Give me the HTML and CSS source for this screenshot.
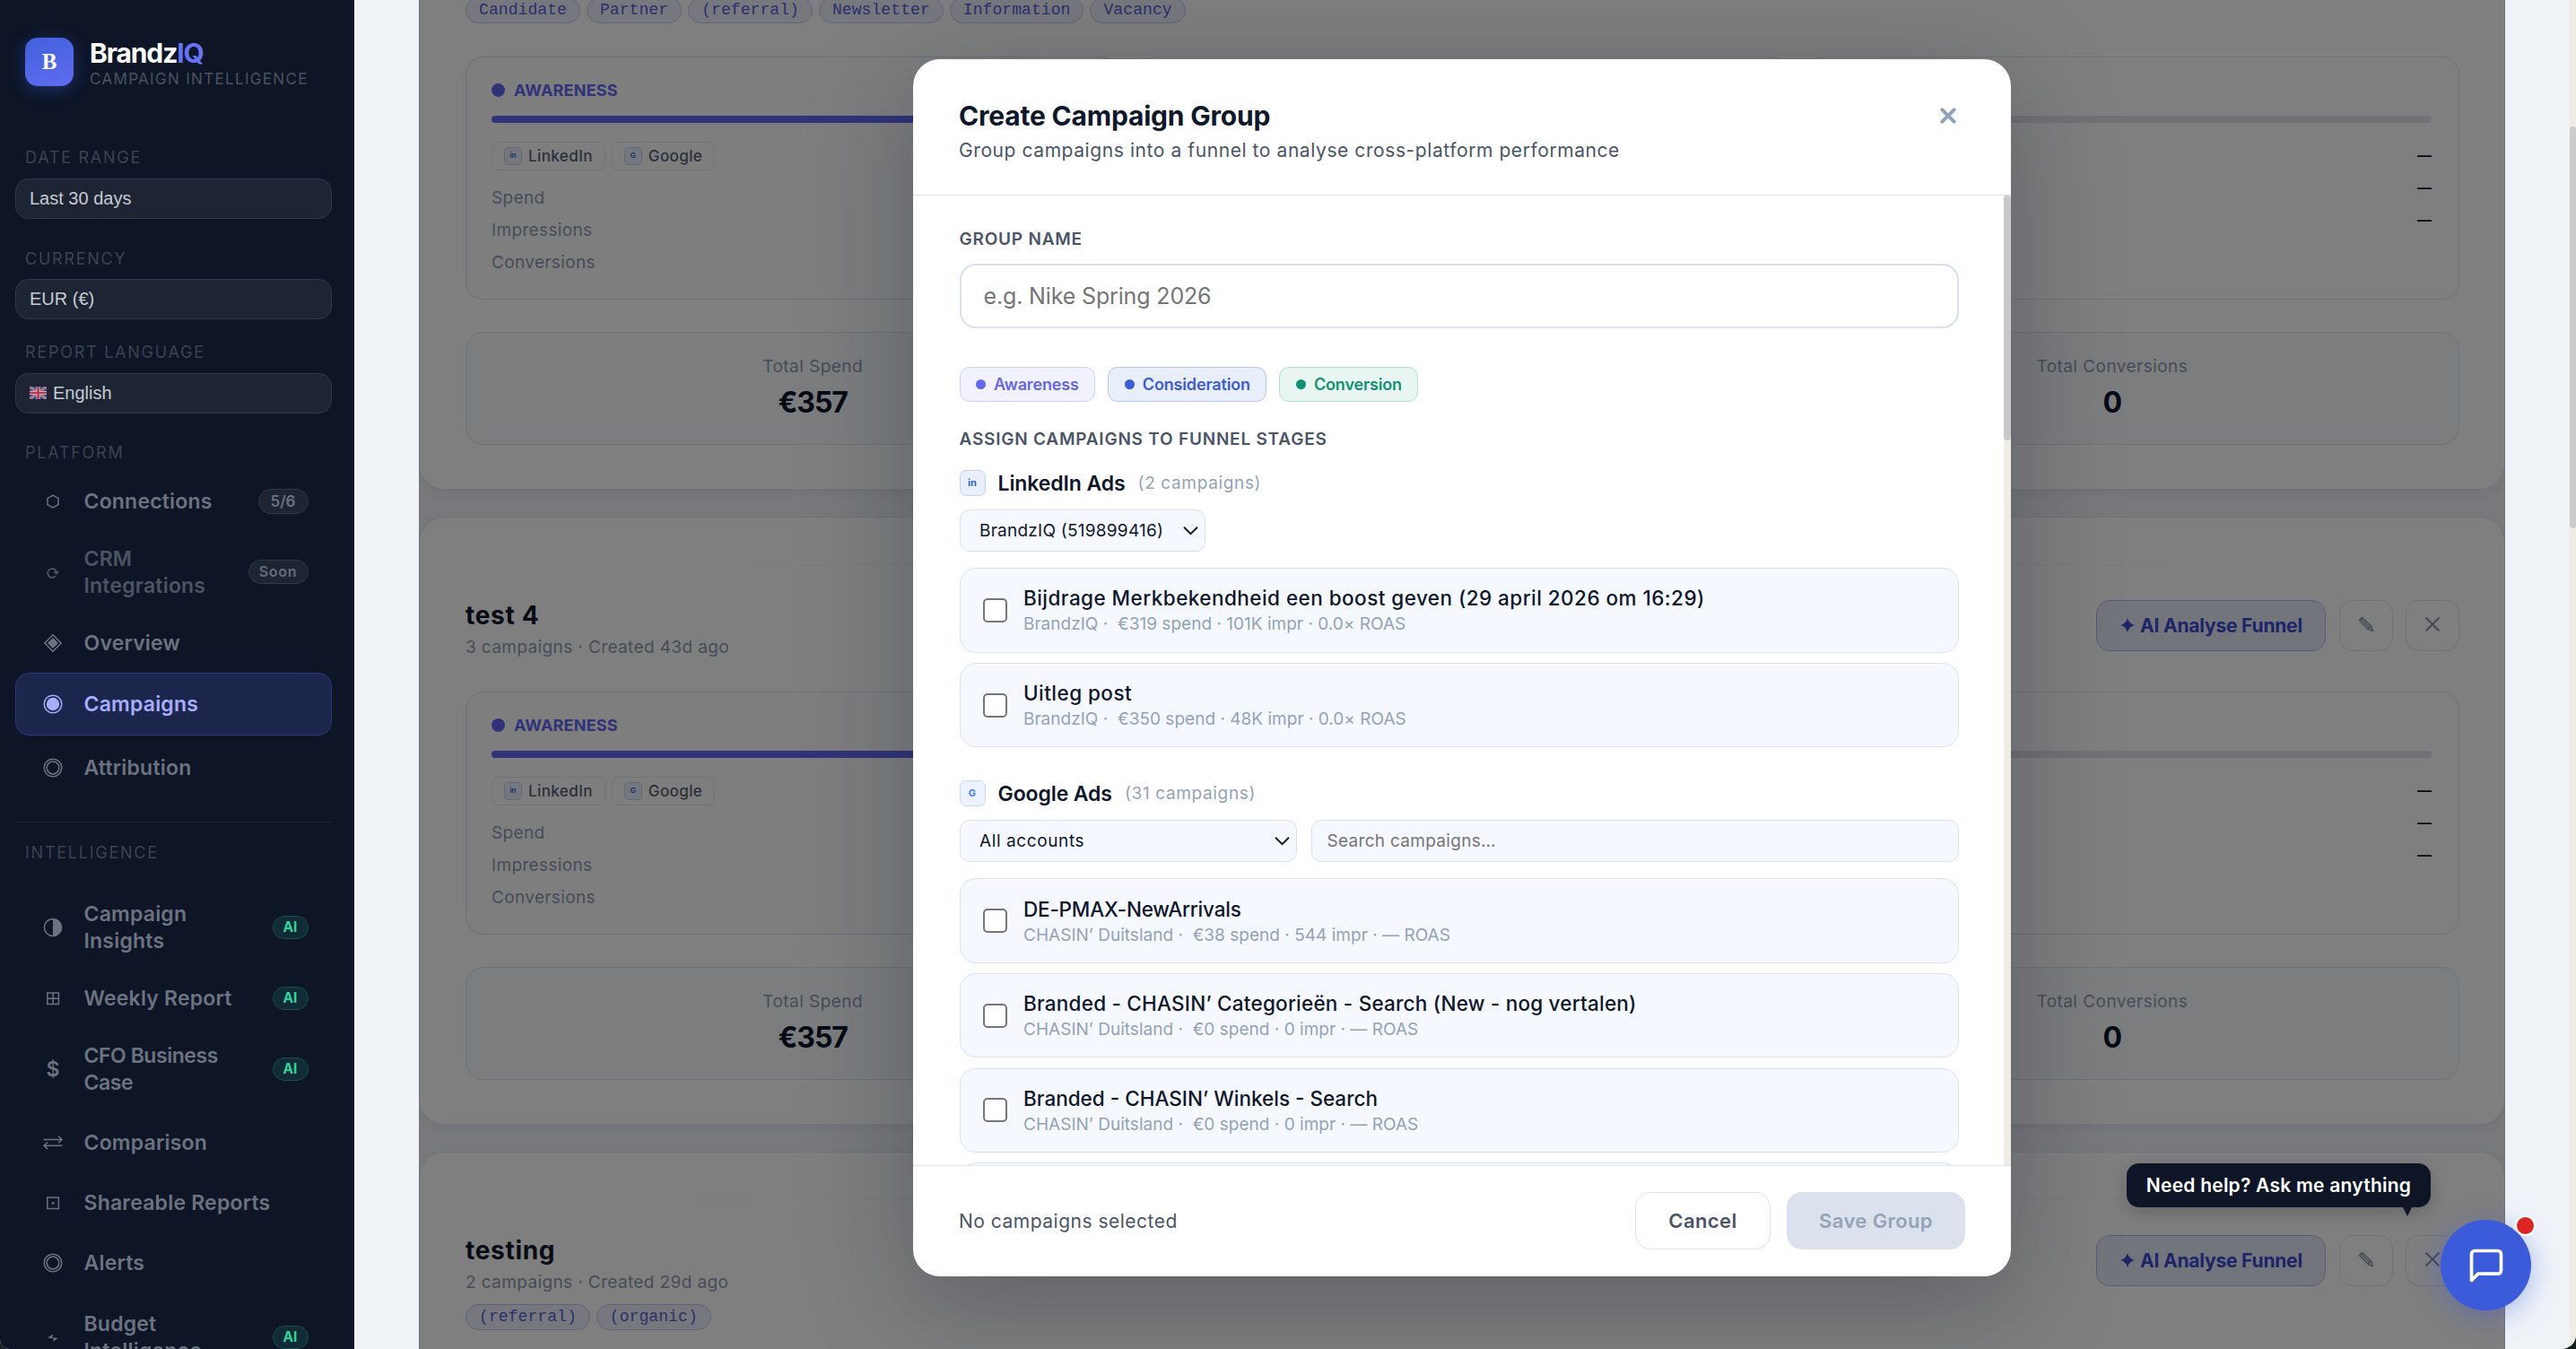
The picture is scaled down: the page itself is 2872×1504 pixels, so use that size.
FILE: index.html
```
<!DOCTYPE html>
<html lang="en">
<head>
    <meta charset="UTF-8" />
    <meta name="viewport" content="width=device-width, initial-scale=1" />
    <title>BrandzIQ - Campaigns</title>
    <link rel="stylesheet" href="styles.css">
</head>
<body>
<div class="app">
    <aside class="sidebar">
        <div class="logo">
            <div class="logo-icon">B</div>
            <div>
                <div class="logo-name">Brandz<span>IQ</span></div>
                <div class="logo-sub">CAMPAIGN INTELLIGENCE</div>
            </div>
        </div>

        <div class="side-label">DATE RANGE</div>
        <div class="side-select">Last 30 days</div>
        <div class="side-label currency">CURRENCY</div>
        <div class="side-select">EUR (€)</div>
        <div class="side-label language">REPORT LANGUAGE</div>
        <div class="side-select">
            <svg class="flag" viewBox="0 0 19 14">
                <rect width="19" height="14" rx="1" fill="#2f4a86"/>
                <path d="M0 0L19 14M19 0L0 14" stroke="#d5d8de" stroke-width="2.4"/>
                <path d="M0 0L19 14M19 0L0 14" stroke="#b8394a" stroke-width="1.2"/>
                <path d="M9.5 0V14M0 7H19" stroke="#d5d8de" stroke-width="4"/>
                <path d="M9.5 0V14M0 7H19" stroke="#b8394a" stroke-width="2.6"/>
            </svg>
            English
        </div>

        <div class="side-label platform">PLATFORM</div>
        <nav>
            <a class="nav-item">
                <svg class="nav-icon" viewBox="0 0 24 24"><path d="M12 5.2L18 8.6V15.6L12 19L6 15.6V8.6Z"/></svg>
                <span class="nav-text">Connections</span>
                <span class="badge count">5/6</span>
            </a>
            <a class="nav-item double dim">
                <svg class="nav-icon" viewBox="0 0 24 24"><path d="M15 16.2A5 5 0 1 1 16 11.5" stroke-width="1.9"/><path d="M12 11H18.8L15.8 15Z" class="solid"/></svg>
                <span class="nav-text">CRM<br>Integrations</span>
                <span class="badge soon">Soon</span>
            </a>
            <a class="nav-item">
                <svg class="nav-icon" viewBox="0 0 24 24"><path d="M12 2.8L21.2 12L12 21.2L2.8 12Z"/><path d="M12 6L18 12L12 18L6 12Z" class="solid"/></svg>
                <span class="nav-text">Overview</span>
            </a>
            <a class="nav-item active">
                <svg class="nav-icon" viewBox="0 0 24 24"><circle cx="12" cy="12" r="9.8"/><circle cx="12" cy="12" r="7.2" class="solid"/></svg>
                <span class="nav-text">Campaigns</span>
            </a>
            <a class="nav-item tall">
                <svg class="nav-icon" viewBox="0 0 24 24"><circle cx="12" cy="12" r="9.8"/><circle cx="12" cy="12" r="6.9"/></svg>
                <span class="nav-text">Attribution</span>
            </a>
        </nav>

        <div class="side-label intelligence">INTELLIGENCE</div>
        <nav class="intelligence-nav">
            <a class="nav-item double">
                <svg class="nav-icon" viewBox="0 0 24 24"><circle cx="12" cy="12" r="9.6"/><path d="M12 2.4A9.6 9.6 0 0 1 12 21.6Z" class="solid"/></svg>
                <span class="nav-text">Campaign<br>Insights</span>
                <span class="badge ai">AI</span>
            </a>
            <a class="nav-item">
                <svg class="nav-icon" viewBox="0 0 24 24"><path d="M5.8 6H18.4V18.6H5.8ZM12.1 6V18.6M5.8 12.3H18.4"/></svg>
                <span class="nav-text">Weekly Report</span>
                <span class="badge ai">AI</span>
            </a>
            <a class="nav-item double">
                <span class="nav-icon dollar">$</span>
                <span class="nav-text tight">CFO Business<br>Case</span>
                <span class="badge ai">AI</span>
            </a>
            <a class="nav-item tall">
                <svg class="nav-icon" viewBox="0 0 24 24"><path d="M1.5 8.5H22M18 4.8L22 8.5L18 12.2M22.5 15.2H2M6 11.5L2 15.2L6 18.9"/></svg>
                <span class="nav-text">Comparison</span>
            </a>
            <a class="nav-item short">
                <svg class="nav-icon" viewBox="0 0 24 24"><path d="M5.8 6H18.4V18.6H5.8Z"/><path d="M10.8 11H13.4V13.6H10.8Z" class="solid"/></svg>
                <span class="nav-text">Shareable Reports</span>
            </a>
            <a class="nav-item tall">
                <svg class="nav-icon" viewBox="0 0 24 24"><circle cx="12" cy="12" r="9.8"/><circle cx="12" cy="12" r="6.9"/></svg>
                <span class="nav-text">Alerts</span>
            </a>
            <a class="nav-item double">
                <svg class="nav-icon" viewBox="0 0 24 24"><path d="M6 12.5L12 8.5L11.2 12.2L18 12.8L12.2 16.8L12.8 13.4Z" class="solid"/></svg>
                <span class="nav-text">Budget<br>Intelligence</span>
                <span class="badge ai">AI</span>
            </a>
        </nav>
    </aside>

    <main class="main">
        <div class="groups">
            <section class="group first">
                <div class="group-head">
                    <div>
                        <h2>test 5</h2>
                        <p>6 campaigns · Created 50d ago</p>
                        <div class="tags"><span>Candidate</span><span>Partner</span><span>(referral)</span><span>Newsletter</span><span>Information</span><span>Vacancy</span></div>
                    </div>
                </div>
                <div class="stages">
                    <div class="stage awareness">
                        <div class="stage-name"><i></i>AWARENESS</div>
                        <div class="bar"></div>
                        <div class="chips"><span><b>in</b>LinkedIn</span><span><b>G</b>Google</span></div>
                        <div class="metric">Spend</div>
                        <div class="metric">Impressions</div>
                        <div class="metric">Conversions</div>
                    </div>
                    <div class="stage"></div>
                    <div class="stage">
                        <div class="stage-name"></div>
                        <div class="bar empty"></div>
                        <div class="metric value">—</div>
                        <div class="metric value">—</div>
                        <div class="metric value">—</div>
                    </div>
                </div>
                <div class="totals">
                    <div><p>Total Spend</p><strong>€357</strong></div>
                    <div></div>
                    <div><p>Total Conversions</p><strong>0</strong></div>
                </div>
            </section>

            <section class="group">
                <div class="group-head">
                    <div>
                        <h2>test 4</h2>
                        <p>3 campaigns · Created 43d ago</p>
                    </div>
                    <div class="actions">
                        <button class="analyse"><svg viewBox="0 0 16 16"><path d="M8 0Q9.6 6.4 16 8Q9.6 9.6 8 16Q6.4 9.6 0 8Q6.4 6.4 8 0Z"/></svg>AI Analyse Funnel</button>
                        <button class="icon-btn"><svg viewBox="0 0 18 18"><path d="M1.5 4.5L4.5 1.5L14.5 11L16.5 16.5L11 14.5ZM3 3L13 12.8M11 14.5L14.5 11"/></svg></button>
                        <button class="icon-btn"><svg viewBox="0 0 18 18"><path d="M1.5 1.5L16.5 16.5M16.5 1.5L1.5 16.5" stroke-width="2"/></svg></button>
                    </div>
                </div>
                <div class="stages">
                    <div class="stage awareness">
                        <div class="stage-name"><i></i>AWARENESS</div>
                        <div class="bar"></div>
                        <div class="chips"><span><b>in</b>LinkedIn</span><span><b>G</b>Google</span></div>
                        <div class="metric">Spend</div>
                        <div class="metric">Impressions</div>
                        <div class="metric">Conversions</div>
                    </div>
                    <div class="stage"></div>
                    <div class="stage">
                        <div class="stage-name"></div>
                        <div class="bar empty"></div>
                        <div class="metric value">—</div>
                        <div class="metric value">—</div>
                        <div class="metric value">—</div>
                    </div>
                </div>
                <div class="totals">
                    <div><p>Total Spend</p><strong>€357</strong></div>
                    <div></div>
                    <div><p>Total Conversions</p><strong>0</strong></div>
                </div>
            </section>

            <section class="group">
                <div class="group-head">
                    <div>
                        <h2>testing</h2>
                        <p>2 campaigns · Created 29d ago</p>
                        <div class="tags"><span>(referral)</span><span>(organic)</span></div>
                    </div>
                    <div class="actions">
                        <button class="analyse"><svg viewBox="0 0 16 16"><path d="M8 0Q9.6 6.4 16 8Q9.6 9.6 8 16Q6.4 9.6 0 8Q6.4 6.4 8 0Z"/></svg>AI Analyse Funnel</button>
                        <button class="icon-btn"><svg viewBox="0 0 18 18"><path d="M1.5 4.5L4.5 1.5L14.5 11L16.5 16.5L11 14.5ZM3 3L13 12.8M11 14.5L14.5 11"/></svg></button>
                        <button class="icon-btn"><svg viewBox="0 0 18 18"><path d="M1.5 1.5L16.5 16.5M16.5 1.5L1.5 16.5" stroke-width="2"/></svg></button>
                    </div>
                </div>
            </section>

            <div class="overlay">
                <div class="modal">
                    <header class="modal-head">
                        <div>
                            <h1>Create Campaign Group</h1>
                            <p>Group campaigns into a funnel to analyse cross-platform performance</p>
                        </div>
                        <svg class="close" viewBox="0 0 18 18"><path d="M2.4 2.4L15.6 15.6M15.6 2.4L2.4 15.6"/></svg>
                    </header>

                    <div class="modal-body">
                        <div class="modal-content">
                            <div class="field-label">GROUP NAME</div>
                            <div class="name-input">e.g. Nike Spring 2026</div>

                            <div class="pills">
                                <span class="pill pill-awareness"><i></i>Awareness</span>
                                <span class="pill pill-consideration"><i></i>Consideration</span>
                                <span class="pill pill-conversion"><i></i>Conversion</span>
                            </div>

                            <div class="field-label">ASSIGN CAMPAIGNS TO FUNNEL STAGES</div>

                            <div class="platform-row"><b>in</b><strong>LinkedIn Ads</strong><span>(2 campaigns)</span></div>
                            <div class="filters">
                                <div class="select account">BrandzIQ (519899416)<svg viewBox="0 0 16 10"><path d="M1 1.5L8 8.5L15 1.5"/></svg></div>
                            </div>
                            <div class="list">
                                <div class="item"><span class="check"></span><div><h3>Bijdrage Merkbekendheid een boost geven (29 april 2026 om 16:29)</h3><p>BrandzIQ · &nbsp;€319 spend · 101K impr · 0.0× ROAS</p></div></div>
                                <div class="item"><span class="check"></span><div><h3>Uitleg post</h3><p>BrandzIQ · &nbsp;€350 spend · 48K impr · 0.0× ROAS</p></div></div>
                            </div>

                            <div class="platform-row google"><b>G</b><strong>Google Ads</strong><span>(31 campaigns)</span></div>
                            <div class="filters">
                                <div class="select all">All accounts<svg viewBox="0 0 16 10"><path d="M1 1.5L8 8.5L15 1.5"/></svg></div>
                                <div class="search">Search campaigns…</div>
                            </div>
                            <div class="list">
                                <div class="item"><span class="check"></span><div><h3 class="caps">DE-PMAX-NewArrivals</h3><p>CHASIN’ Duitsland · &nbsp;€38 spend · 544 impr · — ROAS</p></div></div>
                                <div class="item"><span class="check"></span><div><h3 class="branded">Branded - CHASIN’ Categorieën - Search (New - nog vertalen)</h3><p>CHASIN’ Duitsland · &nbsp;€0 spend · 0 impr · — ROAS</p></div></div>
                                <div class="item"><span class="check"></span><div><h3 class="winkels">Branded - CHASIN’ Winkels - Search</h3><p>CHASIN’ Duitsland · &nbsp;€0 spend · 0 impr · — ROAS</p></div></div>
                                <div class="item"></div>
                            </div>
                        </div>
                        <div class="modal-scroll"><div></div></div>
                    </div>

                    <footer class="modal-foot">
                        <span>No campaigns selected</span>
                        <button class="cancel">Cancel</button>
                        <button class="save">Save Group</button>
                    </footer>
                </div>
            </div>
        </div>
    </main>

    <div class="page-scroll"><div></div></div>
</div>

<div class="help-tip">Need help? Ask me anything</div>
<div class="help-btn">
    <svg viewBox="0 0 24 24"><path d="M21 15a2 2 0 0 1-2 2H7l-4 4V5a2 2 0 0 1 2-2h14a2 2 0 0 1 2 2z"/></svg>
    <span class="help-dot"></span>
</div>
</body>
</html>
```
FILE: styles.css
```
* {
    box-sizing: border-box;
    margin: 0;
    padding: 0;
}

html {
    background: #14201c;
}

body {
    width: 2872px;
    height: 1504px;
    overflow: hidden;
    position: relative;
    font-family: Inter, "Liberation Sans", sans-serif;
    color: #0f172a;
}

button {
    font-family: inherit;
}

.app {
    display: flex;
    height: 1504px;
    border-radius: 0 0 16px 10px;
    overflow: hidden;
    background: #eff3f8;
}

/* ---------- Sidebar ---------- */
.sidebar {
    width: 395px;
    flex: none;
    height: 1504px;
    padding: 42px 25px 0 17px;
    background: #0d1526;
    overflow: hidden;
}

.logo {
    display: flex;
    gap: 18px;
    padding-left: 11px;
    height: 123px;
}

.logo-icon {
    width: 54px;
    height: 54px;
    border-radius: 14px;
    background: linear-gradient(160deg, #4260dc, #5f6df0);
    box-shadow: 0 4px 18px rgba(67, 97, 238, 0.35);
    color: #fff;
    font: 700 25px/53px "Liberation Serif", serif;
    text-align: center;
}

.logo-name {
    font-size: 30px;
    line-height: 34px;
    font-weight: 700;
    letter-spacing: -1.1px;
    color: #fff;
}

.logo-name span {
    color: #6674f4;
}

.logo-sub {
    margin-top: 2px;
    font-size: 17px;
    line-height: 20px;
    letter-spacing: 1.32px;
    color: #4a5260;
}

.side-label {
    padding-left: 11px;
    font-size: 18px;
    line-height: 22px;
    letter-spacing: 1.75px;
    color: #3b4352;
}

.side-label.currency {
    margin-top: 34px;
}

.side-label.language {
    margin-top: 26px;
}

.side-label.platform {
    margin-top: 33px;
    margin-bottom: 10px;
}

.side-label.intelligence {
    margin-top: 23px;
    padding-top: 23px;
    border-top: 1px solid #1a2335;
}

.side-select {
    display: flex;
    align-items: center;
    gap: 7px;
    height: 45px;
    margin-top: 11.5px;
    padding-left: 15px;
    border: 1px solid #2f3847;
    border-radius: 14px;
    background: #1d2534;
    color: #c6cad1;
    font: 20px "Liberation Sans", sans-serif;
}

.flag {
    width: 19px;
    height: 14px;
}

.nav-item {
    display: flex;
    align-items: center;
    height: 66px;
    padding: 0 25.5px 0 29px;
    border: 1px solid transparent;
    color: #6c7380;
}

.nav-item.double {
    height: 92px;
}

.nav-item.tall {
    height: 73px;
}

.nav-item.short {
    height: 61px;
}

.nav-item.dim {
    color: #4c5463;
}

.nav-item.active {
    height: 70px;
    border-color: #2f377e;
    border-radius: 15px;
    background: #1c264c;
    color: #a6aefd;
}

.nav-icon {
    width: 24px;
    height: 24px;
    margin-right: 22.5px;
    flex: none;
    fill: none;
    stroke: currentColor;
    stroke-width: 1.5;
}

.nav-icon .solid {
    fill: currentColor;
    stroke: none;
}

.dollar {
    font-size: 23px;
    line-height: 24px;
    font-weight: 600;
    text-align: center;
}

.nav-text {
    flex: 1;
    font-size: 23px;
    line-height: 30px;
    font-weight: 600;
    letter-spacing: 0.2px;
    white-space: nowrap;
}

.nav-text.tight {
    letter-spacing: -0.45px;
}

.badge {
    border: 1px solid #2f3847;
    border-radius: 14px;
    background: #1d2534;
    text-align: center;
    font-weight: 600;
}

.badge.count {
    width: 56px;
    line-height: 26px;
    font-size: 17px;
}

.badge.soon {
    width: 67px;
    line-height: 25px;
    font-size: 16px;
    letter-spacing: 0.7px;
    color: #646c7a;
}

.badge.ai {
    width: 40px;
    line-height: 24px;
    font-size: 15.5px;
    font-weight: 700;
    border-color: #195048;
    background: #112c37;
    color: #2fd698;
}

.intelligence-nav {
    margin-top: 26px;
}

/* ---------- Campaign groups ---------- */
.main {
    flex: 1;
    padding: 0 72px;
}

.groups {
    position: relative;
    height: 1504px;
    overflow: hidden;
}

.group {
    margin-bottom: 30px;
    padding: 52px 50px 49px 51px;
    border: 1px solid #e2e6f2;
    border-radius: 28px;
    background: #fff;
    box-shadow: 0 4px 14px rgba(15, 23, 42, 0.06);
}

.group.first {
    margin-top: -173px;
}

.group::before {
    content: "";
    display: block;
    height: 1px;
    margin: 0 160px;
    background: linear-gradient(90deg, transparent, #e0e0f4 45%, #e0e0f4 55%, transparent);
}

.group-head {
    display: flex;
    justify-content: space-between;
    align-items: flex-start;
    padding-top: 38.5px;
    min-height: 104px;
    margin-bottom: 37px;
}

.group-head h2 {
    font-size: 28px;
    line-height: 35px;
    letter-spacing: 0.7px;
}

.group-head p {
    margin-top: 6px;
    font-size: 19px;
    line-height: 24px;
    letter-spacing: 0.38px;
    color: #8d9ab0;
}

.tags {
    display: flex;
    gap: 7px;
    margin-top: 12.5px;
    height: 29px;
}

.tags span {
    padding: 0 14px;
    border: 1px solid #c3c7f3;
    border-radius: 15px;
    background: #eef1fd;
    font: 18px/26px "Liberation Mono", monospace;
    letter-spacing: 0.08px;
    color: #5560d8;
}

.actions {
    display: flex;
    gap: 14.5px;
}

.actions button {
    height: 57px;
    border: 1px solid #dfe3ec;
    border-radius: 15px;
    background: #fff;
}

.actions .analyse {
    display: flex;
    align-items: center;
    gap: 6px;
    width: 256px;
    padding-left: 26px;
    border-color: #b4bbf0;
    background: #e7eafb;
    font-size: 21px;
    font-weight: 700;
    letter-spacing: -0.2px;
    color: #3a4bd0;
    white-space: nowrap;
}

.analyse svg {
    width: 16px;
    height: 16px;
    fill: currentColor;
}

.actions .icon-btn {
    width: 60px;
}

.icon-btn svg {
    width: 18px;
    height: 18px;
    fill: none;
    stroke: #8691a6;
    stroke-width: 1.4;
}

.stages {
    display: grid;
    grid-template-columns: repeat(3, 1fr);
    gap: 20px;
}

.stage {
    height: 271px;
    padding: 24px 30px 24px 28px;
    border: 1px solid #e2e6ee;
    border-radius: 20px;
    background: #fefefe;
}

.stage.awareness {
    border-color: #dcdcf2;
    background: #fcfcff;
}

.stage-name {
    display: flex;
    align-items: center;
    gap: 10px;
    height: 24px;
    font-size: 18px;
    font-weight: 700;
    letter-spacing: 0.2px;
    color: #6366f1;
}

.stage-name i {
    width: 15px;
    height: 15px;
    border-radius: 50%;
    background: #6366f1;
}

.bar {
    height: 8px;
    margin-top: 17px;
    margin-bottom: 17.5px;
    border-radius: 4px;
    background: #6366f1;
}

.bar.empty {
    background: #e2e2ec;
}

.chips {
    display: flex;
    gap: 7px;
    margin: 21px 0 13px;
}

.chips span {
    display: flex;
    align-items: center;
    gap: 7px;
    height: 32px;
    padding: 0 13px;
    border: 1px solid #e6e9f1;
    border-radius: 8px;
    font-size: 17px;
    font-weight: 500;
    letter-spacing: 0.4px;
    color: #556071;
}

.chips b {
    width: 20px;
    height: 20px;
    border: 1px solid #c5d0f3;
    border-radius: 5px;
    background: #eaf0fc;
    font-size: 8px;
    line-height: 17px;
    letter-spacing: 0;
    text-align: center;
    color: #3b6fc8;
}

.metric {
    font-size: 19px;
    line-height: 36.2px;
    letter-spacing: 0.35px;
    color: #8d9ab0;
}

.metric.value {
    text-align: right;
    font-weight: 700;
    font-size: 16px;
    letter-spacing: 0;
    color: #0f172a;
}

.totals {
    display: grid;
    grid-template-columns: repeat(3, 1fr);
    gap: 20px;
    height: 126px;
    margin-top: 36px;
    padding: 24px 34px;
    border: 1px solid #dde4ee;
    border-radius: 20px;
    background: #f7fafd;
    text-align: center;
}

.totals p {
    font-size: 19px;
    line-height: 28px;
    letter-spacing: 0.45px;
    color: #8d9ab0;
}

.totals strong {
    display: block;
    margin-top: 6px;
    font-size: 32px;
    line-height: 40px;
    letter-spacing: -1.1px;
}

/* ---------- Modal ---------- */
.overlay {
    position: absolute;
    inset: 0;
    display: flex;
    justify-content: center;
    padding-top: 66px;
    background: rgba(0, 0, 0, 0.5);
}

.modal {
    display: flex;
    flex-direction: column;
    width: 1224px;
    height: 1357px;
    border-radius: 30px;
    overflow: hidden;
    background: #fff;
    box-shadow: 0 30px 120px rgba(15, 23, 42, 0.3);
}

.modal-head {
    display: flex;
    justify-content: space-between;
    height: 152px;
    padding: 43px 61px 0 51px;
    border-bottom: 1px solid #dfe3ee;
}

.modal-head h1 {
    font-size: 30px;
    line-height: 40px;
    letter-spacing: -0.2px;
}

.modal-head p {
    margin-top: 5px;
    font-size: 21px;
    line-height: 28px;
    letter-spacing: 0.58px;
    color: #4a5568;
}

.close {
    width: 18px;
    height: 18px;
    margin-top: 11px;
    fill: none;
    stroke: #8fa1bb;
    stroke-width: 4;
    stroke-linecap: round;
}

.modal-body {
    display: flex;
    flex: 1;
    min-height: 0;
}

.modal-content {
    flex: 1;
    padding: 37px 50px 0 51.5px;
    overflow: hidden;
}

.modal-scroll {
    width: 8px;
    background: #eeece6;
}

.modal-scroll div {
    height: 273px;
    border-radius: 4px;
    background: #c9c9c9;
}

.field-label {
    font-size: 19px;
    line-height: 24px;
    font-weight: 600;
    letter-spacing: 0.78px;
    color: #4a5568;
}

.name-input {
    height: 72px;
    margin-top: 15px;
    padding-left: 25px;
    border: 2px solid #d9e2f0;
    border-radius: 18px;
    font-size: 25px;
    line-height: 68px;
    letter-spacing: -0.15px;
    color: #757575;
}

.pills {
    display: flex;
    gap: 14px;
    margin: 43px 0 30px;
}

.pill {
    display: flex;
    align-items: center;
    gap: 9px;
    height: 39px;
    padding: 0 17.5px;
    border: 1px solid;
    border-radius: 11px;
    font-size: 18px;
    font-weight: 600;
    letter-spacing: -0.15px;
}

.pill i {
    width: 11px;
    height: 11px;
    border-radius: 50%;
    background: currentColor;
}

.pill-awareness {
    border-color: #cfd1fa;
    background: #f2f2fe;
    color: #6366f1;
}

.pill-consideration {
    border-color: #b9c4f0;
    background: #e9eefb;
    color: #3b5bdb;
}

.pill-conversion {
    border-color: #b5dfd3;
    background: #e8f5f1;
    color: #0f9273;
}

.platform-row {
    display: flex;
    align-items: center;
    height: 29px;
    margin: 22px 0 15px;
}

.platform-row.google {
    margin-top: 37px;
}

.platform-row b {
    width: 29px;
    height: 29px;
    margin-right: 14px;
    border: 1px solid #bfd2f3;
    border-radius: 7px;
    background: #e9f0fb;
    font-size: 11px;
    line-height: 27px;
    text-align: center;
    color: #2b67c4;
}

.platform-row.google b {
    border-color: #c9dafa;
    background: #edf3fe;
    color: #4a80ee;
}

.platform-row strong {
    font-size: 23px;
    font-weight: 600;
    letter-spacing: -0.1px;
}

.platform-row span {
    margin-left: 14px;
    font-size: 19px;
    letter-spacing: 0.65px;
    color: #94a3b8;
}

.filters {
    display: flex;
    gap: 16px;
    height: 47px;
}

.select,
.search {
    border: 1px solid #dbe1ef;
    border-radius: 11px;
    background: #f5f8ff;
    font-size: 19px;
    line-height: 45px;
    letter-spacing: 0.25px;
}

.select {
    display: flex;
    justify-content: space-between;
    align-items: center;
    padding: 0 7px 0 21.5px;
}

.select svg {
    width: 17px;
    height: 11px;
    fill: none;
    stroke: #0f172a;
    stroke-width: 1.8;
}

.select.account {
    width: 274px;
}

.select.all {
    width: 376px;
    letter-spacing: 0.6px;
}

.search {
    flex: 1;
    padding-left: 17px;
    letter-spacing: 0.3px;
    color: #757575;
}

.list {
    display: flex;
    flex-direction: column;
    gap: 11.3px;
    margin-top: 18.3px;
}

.item {
    display: flex;
    align-items: center;
    flex: none;
    gap: 18px;
    height: 94.3px;
    padding-left: 25.5px;
    border: 1px solid #dbe1ef;
    border-radius: 18px;
    background: #f5f8ff;
}

.check {
    width: 27px;
    height: 27px;
    border: 2px solid #767676;
    border-radius: 5px;
    background: #fff;
}

.item h3 {
    padding-top: 2px;
    font-size: 22.5px;
    line-height: 30px;
    font-weight: 500;
    letter-spacing: 0.45px;
}

.item h3.caps {
    letter-spacing: -0.2px;
}

.item h3.branded {
    letter-spacing: 0.22px;
}

.item h3.winkels {
    letter-spacing: 0;
}

.item p {
    font-size: 19px;
    line-height: 28px;
    letter-spacing: 0.02px;
    color: #94a3b8;
}

.modal-foot {
    display: flex;
    align-items: center;
    gap: 18px;
    height: 124px;
    padding: 0 51px 1px;
    border-top: 1px solid #dfe3ee;
}

.modal-foot span {
    flex: 1;
    font-size: 21px;
    letter-spacing: 0.5px;
    color: #4a5568;
}

.modal-foot button {
    height: 64px;
    border-radius: 17px;
    font-size: 22px;
    font-weight: 600;
    letter-spacing: 0.4px;
}

.cancel {
    width: 151px;
    border: 1px solid #dfe3ee;
    background: #fff;
    color: #4a5568;
}

.save {
    width: 199px;
    border: none;
    background: #dbe2ee;
    color: #94a3b8;
}

/* ---------- Page scrollbar ---------- */
.page-scroll {
    width: 7px;
    padding-top: 141px;
    background: #efece6;
}

.page-scroll div {
    height: 448px;
    border-radius: 4px;
    background: #cbcbcb;
}

/* ---------- Help widget ---------- */
.help-tip {
    position: absolute;
    left: 2371px;
    top: 1297px;
    width: 339px;
    height: 49px;
    border-radius: 14px;
    background: #0d1526;
    box-shadow: 0 6px 20px rgba(0, 0, 0, 0.2);
    color: #fff;
    font-size: 21px;
    line-height: 49px;
    font-weight: 600;
    letter-spacing: 0.23px;
    text-align: center;
}

.help-tip::after {
    content: "";
    position: absolute;
    right: 21px;
    top: 49px;
    border: 5.5px solid transparent;
    border-top: 10px solid #0d1526;
    border-bottom: none;
}

.help-btn {
    position: absolute;
    left: 2721px;
    top: 1360px;
    width: 101px;
    height: 101px;
    border-radius: 50%;
    background: #3b5bdb;
    box-shadow: 0 6px 30px rgba(59, 91, 219, 0.4);
}

.help-btn svg {
    display: block;
    width: 44px;
    height: 44px;
    margin: 28.5px;
    fill: none;
    stroke: #fff;
    stroke-width: 2;
    stroke-linecap: round;
    stroke-linejoin: round;
}

.help-dot {
    position: absolute;
    right: -5px;
    top: -5px;
    width: 23px;
    height: 23px;
    border: 2.5px solid #fff;
    border-radius: 50%;
    background: #e02424;
}
```
